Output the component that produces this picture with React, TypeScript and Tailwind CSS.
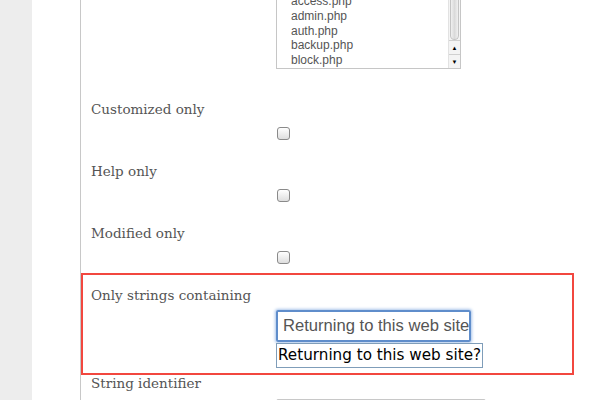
import React from "react";

const labelCls =
  "text-[13.5px] leading-[20px] text-[#555] [font-family:'DejaVu_Serif',serif]";

function Checkbox() {
  return (
    <div className="ml-[186px] mt-2 h-[13px] w-[13px] rounded-[3px] border border-[#8a8a8a] bg-gradient-to-b from-white to-[#dedede]" />
  );
}

export default function App() {
  const files = ["access.php", "admin.php", "auth.php", "backup.php", "block.php"];
  return (
    <div className="flex h-[400px] w-[600px] overflow-hidden bg-white">
      <div className="w-8 shrink-0 bg-[#ededed]" />
      <div className="relative ml-12 flex-1 border-l border-[#c8c8c8]">
        <div className="pl-[10px]">
          {/* listbox */}
          <div className="ml-[185px] -mt-[7px] flex h-[76px] w-[185px] overflow-hidden border border-[#c6c6c6] bg-white">
            <div className="flex-1 pl-[14px] text-[12px] leading-[14.75px] text-[#555] [font-family:'Liberation_Sans',Arial,sans-serif]">
              {files.map((f) => (
                <div key={f}>{f}</div>
              ))}
            </div>
            <div className="flex w-[12px] flex-col border-l border-[#e2e2e2] bg-[#f4f4f4]">
              <div className="mx-[1px] flex-1 rounded-b-[5px] border border-t-0 border-[#c4c4c4] bg-gradient-to-r from-[#f0f0f0] via-[#dadada] to-[#f0f0f0]" />
              <div className="flex h-[14px] items-center justify-center border-t border-[#d0d0d0] text-[6px] leading-none text-black">
                ▲
              </div>
              <div className="flex h-[14px] items-center justify-center border-t border-[#d0d0d0] text-[6px] leading-none text-black">
                ▼
              </div>
            </div>
          </div>

          <div className={`mt-[30px] ${labelCls}`}>Customized only</div>
          <Checkbox />
          <div className={`mt-[21px] ${labelCls}`}>Help only</div>
          <Checkbox />
          <div className={`mt-[21px] ${labelCls}`}>Modified only</div>
          <Checkbox />

          <div className={`mt-[21px] ${labelCls}`}>Only strings containing</div>
          <div className="relative ml-[185px] mt-[5px] w-[195px]">
            <div className="h-[32px] overflow-hidden whitespace-nowrap rounded-[2px] border-2 border-[#5f8dcb] pl-[5px] pr-[2px] text-[16.6px] leading-[28px] text-[#555] shadow-[0_0_3px_1px_#a9c4ea] [font-family:'Liberation_Sans',Arial,sans-serif]">
              Returning to this web site?
            </div>
            <div className="absolute left-0 top-[33px] h-[25px] w-[207px] border border-[#7f9db9] bg-white pl-[1px] text-[15.2px] leading-[23px] text-black [font-family:'DejaVu_Sans',sans-serif]">
              Returning to this web site?
            </div>
          </div>

          <div className={`mt-[31px] ${labelCls}`}>String identifier</div>
          <div className="ml-[185px] mt-[6px] h-[32px] w-[210px] rounded-[2px] border border-[#c8c8c8]" />
        </div>

        <div className="pointer-events-none absolute left-0 top-[273px] h-[102px] w-[493px] border-2 border-[#f2473f]" />
      </div>
    </div>
  );
}
